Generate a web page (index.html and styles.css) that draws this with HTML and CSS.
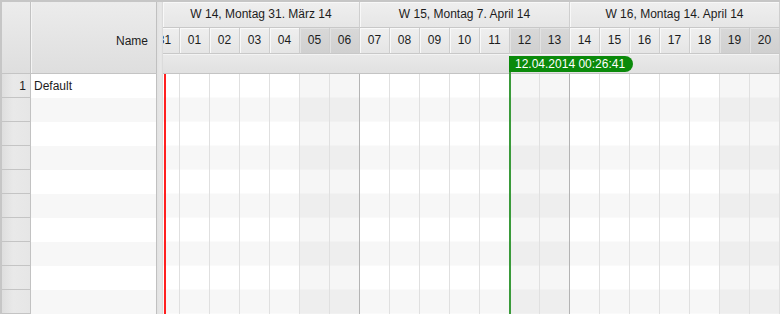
FILE: index.html
```html
<!DOCTYPE html>
<html lang="de">
<head>
<meta charset="utf-8">
<title>Gantt</title>
<link rel="stylesheet" href="styles.css">
</head>
<body>
<div class="frame">
  <div class="left">
    <div class="lhead">
      <div class="numhead"></div>
      <div class="namehead">Name</div>
    </div>
    <div class="lrows">
      <div class="lrow"><div class="num">1</div><div class="name">Default</div></div>
      <div class="lrow alt"><div class="num"></div><div class="name"></div></div>
      <div class="lrow"><div class="num"></div><div class="name"></div></div>
      <div class="lrow alt"><div class="num"></div><div class="name"></div></div>
      <div class="lrow"><div class="num"></div><div class="name"></div></div>
      <div class="lrow alt"><div class="num"></div><div class="name"></div></div>
      <div class="lrow"><div class="num"></div><div class="name"></div></div>
      <div class="lrow alt"><div class="num"></div><div class="name"></div></div>
      <div class="lrow"><div class="num"></div><div class="name"></div></div>
      <div class="lrow alt"><div class="num"></div><div class="name"></div></div>
    </div>
  </div>
  <div class="splitter"></div>
  <div class="gantt">
    <div class="weeks">
      <div class="week w14">W 14, Montag 31. März 14</div>
      <div class="week w15">W 15, Montag 7. April 14</div>
      <div class="week w16">W 16, Montag 14. April 14</div>
    </div>
    <div class="dayclip">
      <div class="days">
        <div class="day">31</div>
        <div class="day">01</div>
        <div class="day">02</div>
        <div class="day">03</div>
        <div class="day">04</div>
        <div class="day we">05</div>
        <div class="day we wk">06</div>
        <div class="day">07</div>
        <div class="day">08</div>
        <div class="day">09</div>
        <div class="day">10</div>
        <div class="day">11</div>
        <div class="day we">12</div>
        <div class="day we wk">13</div>
        <div class="day">14</div>
        <div class="day">15</div>
        <div class="day">16</div>
        <div class="day">17</div>
        <div class="day">18</div>
        <div class="day we">19</div>
        <div class="day we">20</div>
      </div>
    </div>
    <div class="strip"></div>
    <div class="body">
      <div class="grows">
        <div class="grow"></div>
        <div class="grow alt"></div>
        <div class="grow"></div>
        <div class="grow alt"></div>
        <div class="grow"></div>
        <div class="grow alt"></div>
        <div class="grow"></div>
        <div class="grow alt"></div>
        <div class="grow"></div>
        <div class="grow alt"></div>
      </div>
      <div class="gcols">
        <div class="gcol"></div>
        <div class="gcol"></div>
        <div class="gcol"></div>
        <div class="gcol"></div>
        <div class="gcol"></div>
        <div class="gcol we"></div>
        <div class="gcol we wk"></div>
        <div class="gcol"></div>
        <div class="gcol"></div>
        <div class="gcol"></div>
        <div class="gcol"></div>
        <div class="gcol"></div>
        <div class="gcol we"></div>
        <div class="gcol we wk"></div>
        <div class="gcol"></div>
        <div class="gcol"></div>
        <div class="gcol"></div>
        <div class="gcol"></div>
        <div class="gcol"></div>
        <div class="gcol we"></div>
        <div class="gcol we"></div>
      </div>
      <div class="redline"></div>
      <div class="greenline"></div>
    </div>
    <div class="badge">12.04.2014 00:26:41</div>
  </div>
</div>
</body>
</html>
```
FILE: styles.css
```css
* { box-sizing: border-box; }
html, body { margin: 0; padding: 0; background: #ffffff; }
body {
  font-family: "Liberation Sans", Arial, sans-serif;
  font-size: 12px;
  color: #1c1c1c;
}
.frame {
  width: 780px;
  height: 314px;
  overflow: hidden;
  display: flex;
  border-left: 2px solid #c6c6c6;
  border-top: 2px solid #c6c6c6;
}

/* left table */
.left { width: 155px; display: flex; flex-direction: column; flex: none; }
.lhead {
  height: 72px;
  display: flex;
  border-bottom: 1px solid #c4c4c4;
  flex: none;
}
.numhead {
  width: 29px;
  border-right: 1px solid #c2c2c2;
  background: linear-gradient(#ececec, #dedede);
}
.namehead {
  flex: 1;
  border-right: 1px solid #c0c0c0;
  background: linear-gradient(#ececec, #dedede);
  box-shadow: inset 1px 0 0 #f4f4f4;
  display: flex;
  align-items: center;
  justify-content: flex-end;
  padding-right: 8px;
  padding-top: 6px;
}
.lrows { display: flex; flex-direction: column; }
.lrow { height: 24px; display: flex; flex: none; }
.num {
  width: 29px;
  border-right: 1px solid #c2c2c2;
  border-bottom: 1px solid #c4c4c4;
  background: linear-gradient(to right, #dedede, #e9e9e9 40%, #e6e6e6);
  text-align: right;
  padding-right: 4px;
  padding-top: 1px;
  line-height: 23px;
}
.name {
  flex: 1;
  border-right: 1px solid #c0c0c0;
  background: #ffffff;
  padding-left: 3px;
  padding-top: 1px;
  line-height: 23px;
}
.lrow.alt .name { background: #f7f7f7; }

/* splitter */
.splitter {
  width: 6px;
  flex: none;
  background: linear-gradient(to right, #e2e2e2, #e8e8e8 70%, #d6d6d6);
}

/* gantt */
.gantt {
  width: 617px;
  flex: none;
  position: relative;
  overflow: hidden;
  display: flex;
  flex-direction: column;
}
.weeks { display: flex; height: 26px; flex: none; }
.week {
  height: 26px;
  border-right: 1px solid #cfcfcf;
  border-bottom: 1px solid #c8c8c8;
  background: linear-gradient(#efefef, #e6e6e6);
  box-shadow: inset 1px 1px 0 #f8f8f8;
  text-align: center;
  line-height: 25px;
}
.w14 { width: 197px; }
.w15 { width: 210px; }
.w16 { width: 210px; }

.dayclip { height: 26px; overflow: hidden; flex: none; }
.days { display: flex; margin-left: -13px; }
.day {
  width: 30px;
  height: 26px;
  flex: none;
  border-right: 1px solid #cdcdcd;
  border-bottom: 1px solid #c8c8c8;
  background: linear-gradient(#efefef, #e5e5e5);
  box-shadow: inset 1px 1px 0 #f9f9f9;
  text-align: center;
  line-height: 25px;
}
.day.we {
  background: linear-gradient(#d8d8d8, #d0d0d0);
  box-shadow: inset 1px 1px 0 #e2e2e2;
}

.strip {
  height: 20px;
  flex: none;
  border-bottom: 1px solid #c4c4c4;
  border-right: 1px solid #cdcdcd;
  background: linear-gradient(#e9e9e9, #e1e1e1);
  box-shadow: inset 0 1px 0 #f3f3f3;
}

.body { position: relative; flex: 1; }
.grows { display: flex; flex-direction: column; }
.grow { height: 24px; flex: none; background: #ffffff; border-bottom: 1px solid #fbfbfb; }
.grow.alt { background: #f7f7f7; border-bottom-color: #fafafa; }

.gcols {
  position: absolute;
  top: 0; bottom: 0; left: -13px;
  display: flex;
}
.gcol {
  width: 30px;
  flex: none;
  border-right: 1px solid #e0e0e0;
}
.gcol.we { background: rgba(0, 0, 0, 0.035); }
.gcol.wk { border-right-color: #b4b4b4; }

.redline {
  position: absolute;
  top: 0; bottom: 0;
  left: 1px;
  width: 2px;
  background: #ff2020;
}
.greenline {
  position: absolute;
  top: -2px; bottom: 0;
  left: 346px;
  width: 2px;
  background: #3a9a3a;
}
.badge {
  position: absolute;
  top: 54px;
  left: 346px;
  width: 124px;
  height: 16px;
  background: #0a8a0a;
  border-radius: 0 8px 8px 0;
  color: #ffffff;
  font-size: 12px;
  line-height: 16px;
  padding-left: 6px;
  white-space: nowrap;
}
```
